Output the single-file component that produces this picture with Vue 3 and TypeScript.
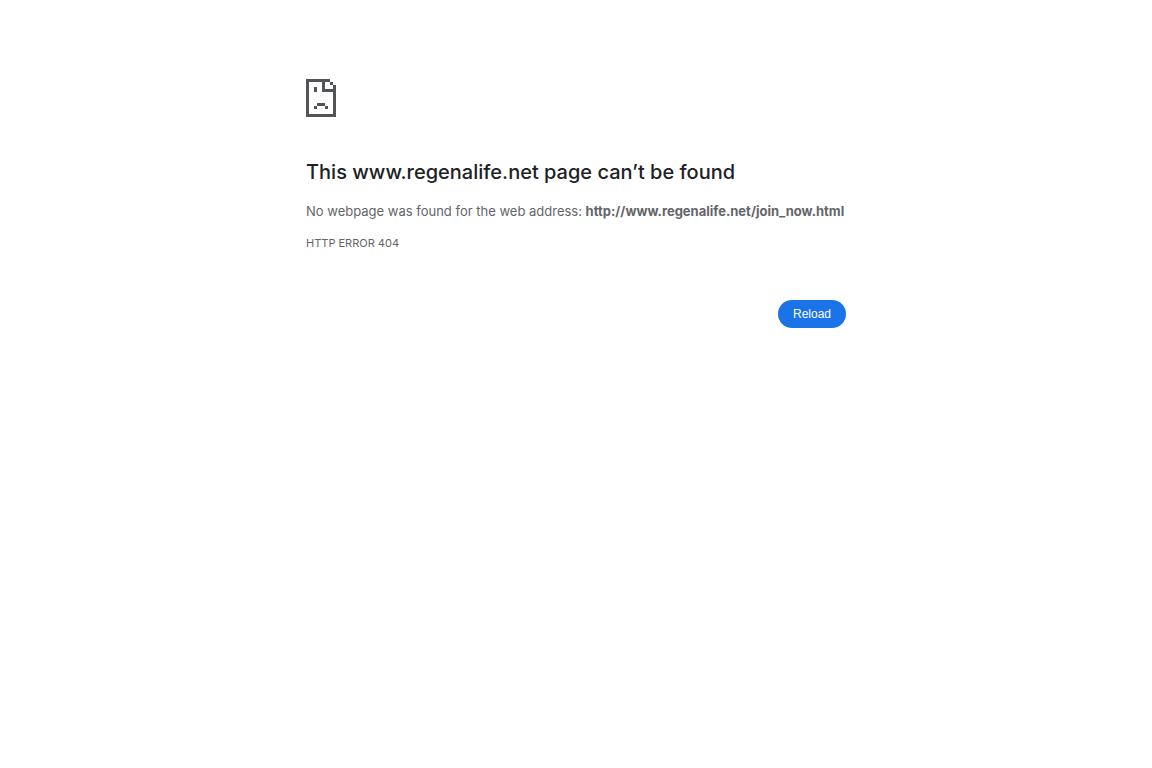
<script setup lang="ts">
const host: string = 'www.regenalife.net'
const address: string = 'http://www.regenalife.net/join_now.html'

function reload(): void {
  window.location.reload()
}
</script>

<template>
  <main class="page">
    <svg class="icon" viewBox="0 0 30 38" aria-hidden="true" shape-rendering="crispEdges">
      <path fill="#535457" fill-rule="evenodd" d="M0 0H24V3H27V6H30V38H0ZM3 3V35H27V13H16V3ZM19 3V10H27V6H24V3Z" />
      <path fill="#535457" d="M8 8H11V13H8ZM11 24H19V27H11ZM8 27H11V30H8ZM19 27H22V30H19Z" />
    </svg>
    <h1 class="title">This {{ host }} page can’t be found</h1>
    <p class="summary">No webpage was found for the web address: <strong>{{ address }}</strong></p>
    <p class="code">HTTP ERROR 404</p>
    <div class="actions">
      <button class="reload" type="button" @click="reload">Reload</button>
    </div>
  </main>
</template>

<style>
body {
  margin: 0;
  background: #ffffff;
}
</style>

<style scoped>
.page {
  box-sizing: border-box;
  max-width: 540px;
  margin: 0 auto;
  padding-top: 79px;
  font-family: Inter, "Liberation Sans", sans-serif;
  color: #646568;
}
.icon {
  display: block;
  width: 30px;
  height: 38px;
}
.title {
  margin: 42px 0 0;
  font-size: 20px;
  line-height: 26px;
  font-weight: 500;
  color: #202124;
}
.summary {
  margin: 15px 0 0;
  font-size: 13px;
  line-height: 22px;
}
.summary strong {
  font-weight: 700;
}
.code {
  margin: 13px 0 0;
  font-size: 11px;
  line-height: 16px;
}
.actions {
  display: flex;
  justify-content: flex-end;
  margin-top: 49px;
}
.reload {
  height: 28px;
  padding: 0 15px;
  border: 0;
  border-radius: 14px;
  background: #1a73e8;
  color: #ffffff;
  font-family: "Liberation Sans", Arial, sans-serif;
  font-size: 12px;
  cursor: pointer;
}
</style>
